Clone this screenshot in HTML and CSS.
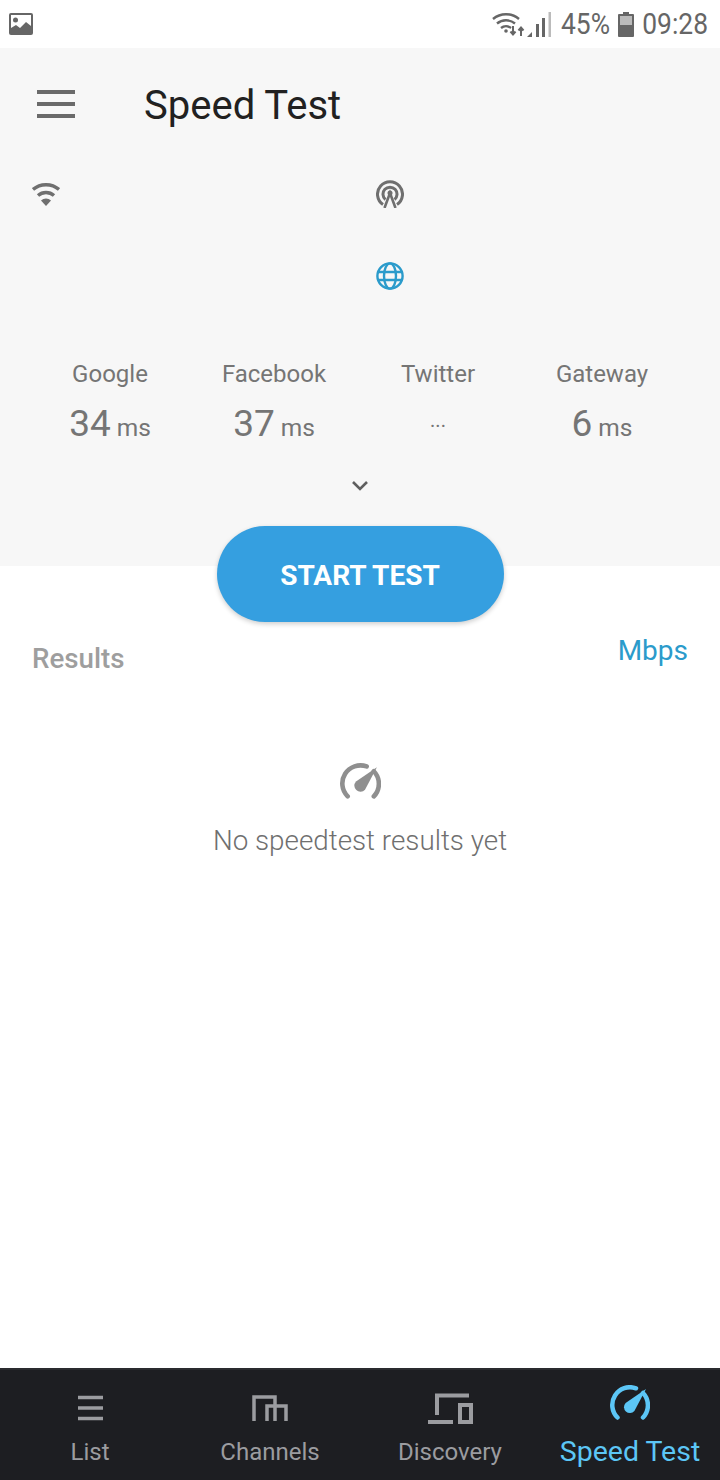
FILE: index.html
```html
<!DOCTYPE html>
<html>
<head>
  <title>Speed Test</title>
  <link rel="stylesheet" href="styles.css">
</head>
<body>
  <svg class="defs" width="0" height="0">
    <symbol id="gauge" viewBox="0 0 40 36">
      <path d="M7.500 32.500A17.700 17.700 0 0 1 26 3.300M33 8A17.700 17.700 0 0 1 33 32.500" fill="none" stroke="currentColor" stroke-width="4.500" stroke-linecap="round"/>
      <path d="M36 4L24.400 26.100A6 6 0 0 1 15.600 17.900Z" fill="currentColor"/>
    </symbol>
  </svg>

  <div class="status-bar">
    <svg class="status-image" width="24" height="22" viewBox="0 0 24 22">
      <rect width="24" height="22" rx="2" fill="#666"/>
      <rect x="2" y="2" width="20" height="18" fill="#fff"/>
      <circle cx="6.500" cy="7" r="2.500" fill="#666"/>
      <path d="M2 20v-5l5-3 4 3 6-6 5 4v7z" fill="#666"/>
    </svg>
    <div class="status-right">
      <svg width="34" height="26" viewBox="0 0 34 26">
        <path d="M1 8A20 20 0 0 1 27 8M5 12.500A14 14 0 0 1 23 12.500M9 17A8 8 0 0 1 19 17" fill="none" stroke="#666" stroke-width="2.400"/>
        <circle cx="14" cy="20" r="1.800" fill="#666"/>
        <path d="M21 15v8M18.500 20.500l2.500 3 2.500-3M29 25v-8M26.500 19.500l2.500-3 2.500 3" fill="none" stroke="#666" stroke-width="2"/>
      </svg>
      <svg width="26" height="26" viewBox="0 0 26 26">
        <path d="M1 26l5-5v5z" fill="#666"/>
        <rect x="10" y="13" width="3" height="13" fill="#666"/>
        <rect x="16" y="7" width="3" height="19" fill="#666"/>
        <rect x="22.500" y="1" width="2.500" height="25" fill="#bbb"/>
      </svg>
      <span class="status-text pct">45%</span>
      <svg width="16" height="26" viewBox="0 0 16 26">
        <rect x="5" y="1" width="6" height="3" fill="#666"/>
        <rect y="3" width="16" height="23" rx="1" fill="#666"/>
        <rect x="2" y="5" width="12" height="9" fill="#bbb"/>
      </svg>
      <span class="status-text clock">09:28</span>
    </div>
  </div>

  <div class="panel">
    <div class="toolbar">
      <div class="menu-icon"><i></i><i></i><i></i></div>
      <h1>Speed Test</h1>
    </div>

    <div class="net-grid">
      <svg class="net-wifi" width="28" height="24" viewBox="0 0 28 24">
        <path d="M1 6.500A20 20 0 0 1 27 6.500M6 12.500A12 12 0 0 1 22 12.500" fill="none" stroke="#6f6f6f" stroke-width="3.400"/>
        <path d="M9 17.500A7.500 7.500 0 0 1 19 17.500L14 23z" fill="#6f6f6f"/>
      </svg>
      <svg width="28" height="28" viewBox="0 0 28 28">
        <path d="M7 24.500A12.500 12.500 0 1 1 21 24.500M9.500 19.500A7 7 0 1 1 18.500 19.500" fill="none" stroke="#6f6f6f" stroke-width="3"/>
        <circle cx="14" cy="13" r="2.500" fill="#6f6f6f"/>
        <path d="M8.500 28L14 13l5.500 15" fill="none" stroke="#6f6f6f" stroke-width="2.600"/>
      </svg>
      <span></span>
      <svg width="28" height="28" viewBox="0 0 28 28" fill="none" stroke="#2b9bcb" stroke-width="2.400">
        <circle cx="14" cy="14" r="12.600"/>
        <ellipse cx="14" cy="14" rx="6" ry="12.600"/>
        <path d="M2 10h24M2 18h24"/>
      </svg>
    </div>

    <div class="pings">
      <div class="ping">
        <div class="ping-name">Google</div>
        <div class="ping-value">34<small>ms</small></div>
      </div>
      <div class="ping">
        <div class="ping-name">Facebook</div>
        <div class="ping-value">37<small>ms</small></div>
      </div>
      <div class="ping">
        <div class="ping-name">Twitter</div>
        <div class="ping-value"><small class="ping-dots">...</small></div>
      </div>
      <div class="ping">
        <div class="ping-name">Gateway</div>
        <div class="ping-value">6<small>ms</small></div>
      </div>
    </div>

    <svg class="chevron" width="18" height="12" viewBox="0 0 18 12">
      <path d="M2 2l7 7 7-7" fill="none" stroke="#5f5f5f" stroke-width="2.600"/>
    </svg>
  </div>

  <div class="content">
    <button class="start-btn">START TEST</button>
    <div class="results-head">
      <span class="results-title">Results</span>
      <span class="results-unit">Mbps</span>
    </div>
    <div class="empty">
      <svg class="empty-icon" width="41" height="37"><use href="#gauge"/></svg>
      <p>No speedtest results yet</p>
    </div>
  </div>

  <nav class="bottom-nav">
    <div class="nav-item">
      <svg width="25" height="26" viewBox="0 0 25 26">
        <path d="M0 2.500h25M0 13h25M0 23.500h25" stroke="currentColor" stroke-width="3.600"/>
      </svg>
      <span>List</span>
    </div>
    <div class="nav-item">
      <svg width="36" height="26" viewBox="0 0 36 26" fill="none" stroke="currentColor" stroke-width="3.500">
        <path d="M2 26V2H23V26M15 26V11H34V26"/>
      </svg>
      <span>Channels</span>
    </div>
    <div class="nav-item">
      <svg class="nav-discovery" width="45" height="31" viewBox="0 0 45 31" fill="none" stroke="currentColor" stroke-width="4">
        <path d="M9 22V2.500H41M0 29H25"/>
        <rect x="32" y="12" width="11" height="17"/>
      </svg>
      <span>Discovery</span>
    </div>
    <div class="nav-item active">
      <svg width="40" height="36"><use href="#gauge"/></svg>
      <span>Speed Test</span>
    </div>
  </nav>
</body>
</html>
```

FILE: styles.css
```css
* {
  box-sizing: border-box;
}
body {
  margin: 0;
  height: 1480px;
  display: flex;
  flex-direction: column;
  font-family: Roboto, sans-serif;
  background: #fff;
  overflow: hidden;
}
.defs {
  position: absolute;
}

/* status bar */
.status-bar {
  height: 48px;
  display: flex;
  align-items: center;
  justify-content: space-between;
  padding: 0 12px 0 9px;
  background: #fff;
}
.status-right {
  display: flex;
  align-items: center;
  color: #666;
}
.status-text {
  font-size: 30px;
  line-height: 48px;
  display: inline-block;
  transform: scaleX(.88);
  transform-origin: right center;
}
.pct {
  width: 48px;
  margin-left: 10px;
  white-space: nowrap;
  direction: rtl;
}
.pct + svg {
  margin-left: 8px;
}
.clock {
  width: 66px;
  margin-left: 8px;
  white-space: nowrap;
  direction: rtl;
}

/* top panel */
.panel {
  height: 518px;
  flex: none;
  display: flex;
  flex-direction: column;
  background: #f7f7f7;
}
.toolbar {
  height: 114px;
  display: flex;
  align-items: center;
  padding-left: 37px;
}
.menu-icon {
  width: 38px;
  display: flex;
  flex-direction: column;
  gap: 8px;
  margin-top: -3px;
}
.menu-icon i {
  display: block;
  height: 4px;
  background: #6a6a6a;
}
h1 {
  margin: 1px 0 0 69px;
  font-size: 40px;
  font-weight: 400;
  color: #212121;
}
.net-grid {
  display: grid;
  grid-template-columns: 344px 28px;
  row-gap: 54px;
  padding: 18px 0 0 32px;
}
.net-wifi {
  margin-top: 3px;
}
.pings {
  display: grid;
  grid-template-columns: repeat(4, 164px);
  margin-top: 70px;
  padding-left: 28px;
  text-align: center;
  color: #757575;
}
.ping-name {
  font-size: 24px;
  line-height: 28px;
}
.ping-value {
  margin-top: 14px;
  font-size: 37px;
  line-height: 44px;
  height: 44px;
}
.ping-value small {
  margin-left: 6px;
  font-size: 24.500px;
}
.ping-value .ping-dots {
  margin-left: 0;
  font-size: 20px;
  line-height: 20px;
  vertical-align: 9px;
}
.chevron {
  align-self: center;
  margin-top: 34px;
}

/* results */
.content {
  flex: 1;
  display: flex;
  flex-direction: column;
}
.start-btn {
  align-self: center;
  width: 287px;
  height: 96px;
  margin-top: -40px;
  padding: 2px 0 0;
  border: 0;
  border-radius: 48px;
  background: #359fe0;
  box-shadow: 0 2px 5px rgba(0, 0, 0, .2);
  color: #fff;
  font-family: Roboto, sans-serif;
  font-size: 28px;
  font-weight: 700;
}
.results-head {
  display: flex;
  justify-content: space-between;
  padding: 0 32px;
  margin-top: 12px;
}
.results-title {
  margin-top: 8px;
  font-size: 27.700px;
  font-weight: 500;
  color: #9e9e9e;
}
.results-unit {
  font-size: 28px;
  color: #2b9bcb;
}
.empty {
  margin-top: 88px;
  text-align: center;
}
.empty-icon {
  color: #8f8f8f;
  display: block;
  margin: 0 auto;
}
.empty p {
  margin: 24px 0 0;
  font-size: 27.800px;
  font-weight: 300;
  color: #6f6f6f;
}

/* bottom nav */
.bottom-nav {
  height: 112px;
  flex: none;
  display: grid;
  grid-template-columns: repeat(4, 1fr);
  background: #1d1e22;
  border-top: 2px solid #2a2b2f;
}
.nav-item {
  display: flex;
  flex-direction: column;
  align-items: center;
  justify-content: flex-end;
  gap: 16px;
  padding-bottom: 13px;
  color: #9b9ca0;
  font-size: 24px;
  line-height: 30px;
}
.nav-discovery {
  margin-bottom: -3px;
}
.nav-item.active {
  color: #5cc6f6;
  font-size: 28.500px;
}
```
